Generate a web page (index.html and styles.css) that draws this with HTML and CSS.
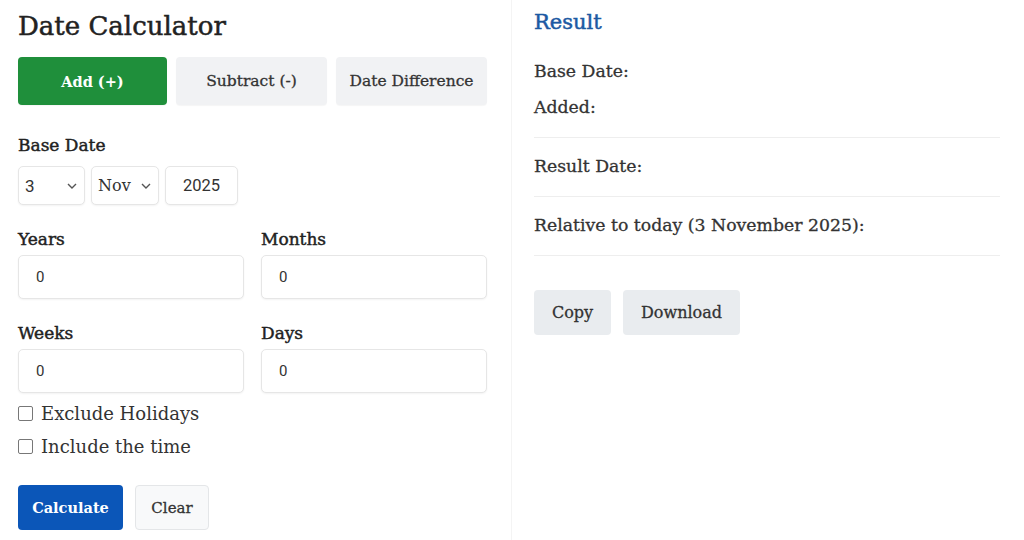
FILE: index.html
```html
<!DOCTYPE html>
<html lang="en">
<head>
<meta charset="utf-8">
<title>Date Calculator</title>
<link rel="stylesheet" href="styles.css">
</head>
<body>
<div class="page">
  <section class="calc">
    <h1 class="title">Date Calculator</h1>
    <div class="tabs">
      <button class="tab tab-active">Add (+)</button>
      <button class="tab">Subtract (-)</button>
      <button class="tab">Date Difference</button>
    </div>
    <div class="field">
      <label class="label">Base Date</label>
      <div class="date-row">
        <div class="select sel-day"><span class="sel-val num">3</span><svg class="chev" viewBox="0 0 10 6"><path d="M1 1l4 4 4-4" fill="none" stroke="#555" stroke-width="1.4"/></svg></div>
        <div class="select sel-mon"><span class="sel-val">Nov</span><svg class="chev" viewBox="0 0 10 6"><path d="M1 1l4 4 4-4" fill="none" stroke="#555" stroke-width="1.4"/></svg></div>
        <div class="year num">2025</div>
      </div>
    </div>
    <div class="grid2">
      <div class="cell">
        <label class="label">Years</label>
        <div class="input num">0</div>
      </div>
      <div class="cell">
        <label class="label">Months</label>
        <div class="input num">0</div>
      </div>
      <div class="cell">
        <label class="label">Weeks</label>
        <div class="input num">0</div>
      </div>
      <div class="cell">
        <label class="label">Days</label>
        <div class="input num">0</div>
      </div>
    </div>
    <div class="checks">
      <label class="check"><span class="box"></span>Exclude Holidays</label>
      <label class="check"><span class="box"></span>Include the time</label>
    </div>
    <div class="actions">
      <button class="btn btn-primary">Calculate</button>
      <button class="btn btn-clear">Clear</button>
    </div>
  </section>
  <section class="result">
    <h2 class="result-title">Result</h2>
    <div class="res-block res-first">
      <p class="res-line">Base Date:</p>
      <p class="res-line">Added:</p>
    </div>
    <div class="res-block">
      <p class="res-line">Result Date:</p>
    </div>
    <div class="res-block">
      <p class="res-line">Relative to today (3 November 2025):</p>
    </div>
    <div class="res-actions">
      <button class="btn btn-gray">Copy</button>
      <button class="btn btn-gray btn-wide">Download</button>
    </div>
  </section>
</div>
</body>
</html>
```

FILE: styles.css
```css
* { box-sizing: border-box; }
html, body { margin: 0; padding: 0; background: #fff; }
body {
  font-family: "Roboto Slab", "DejaVu Serif", serif;
  color: #222;
  width: 1024px;
  height: 540px;
  overflow: hidden;
}
.page {
  display: grid;
  grid-template-columns: 511px 1fr;
  height: 540px;
}
.calc {
  padding: 9px 24px 0 18px;
}
.title {
  margin: 0;
  font-size: 26px;
  font-weight: 400;
  line-height: 34px;
  color: #222;
  -webkit-text-stroke: 0.5px #222;
}
.tabs {
  display: grid;
  grid-template-columns: 149px 151px 151px;
  gap: 9px;
  margin-top: 14px;
}
.tab {
  height: 48px;
  border: none;
  border-radius: 4px;
  background: #f1f2f4;
  color: #333;
  font-family: inherit;
  font-size: 15.5px;
  font-weight: 400;
  padding: 0;
  -webkit-text-stroke: 0.3px #333;
  box-shadow: 0 1px 1px rgba(0,0,0,0.04);
}
.tab-active {
  background: #1f8f3b;
  color: #fff;
  font-size: 14.5px;
  font-weight: 700;
  -webkit-text-stroke: 0;
}
.field { margin-top: 29px; }
.label {
  display: block;
  font-size: 17px;
  font-weight: 400;
  line-height: 22px;
  color: #222;
  -webkit-text-stroke: 0.45px #222;
}
.date-row {
  display: flex;
  gap: 6px;
  margin-top: 10px;
}
.select, .year, .input {
  border: 1px solid #e6e6e6;
  border-radius: 5px;
  background: #fff;
  box-shadow: 0 1px 2px rgba(0,0,0,0.05);
}
.select {
  height: 39px;
  display: flex;
  align-items: center;
  justify-content: space-between;
  padding: 0 7px 0 6px;
  font-size: 16px;
  color: #333;
}
.sel-day { width: 67px; }
.sel-mon { width: 68px; }
.chev { width: 10px; height: 6px; }
.year {
  width: 73px;
  height: 39px;
  display: flex;
  align-items: center;
  justify-content: center;
  font-size: 16.5px;
  color: #333;
}
.num { font-family: Roboto, "Liberation Sans", sans-serif; }
.sel-val.num { font-size: 17px; }
.grid2 {
  display: grid;
  grid-template-columns: 226px 226px;
  column-gap: 17px;
  row-gap: 23px;
  margin-top: 23px;
}
.input {
  margin-top: 5px;
  height: 44px;
  display: flex;
  align-items: center;
  padding: 0 17px;
  font-size: 15px;
  color: #333;
}
.checks { margin-top: 4px; }
.check {
  display: flex;
  align-items: center;
  gap: 8px;
  font-size: 18px;
  line-height: 33px;
  color: #333;
}
.box {
  width: 15px;
  height: 15px;
  border: 1px solid #777;
  border-radius: 2px;
  background: #fff;
}
.actions {
  display: flex;
  gap: 12px;
  margin-top: 22px;
}
.btn {
  height: 45px;
  border-radius: 4px;
  font-family: inherit;
  font-size: 15px;
  font-weight: 400;
  padding: 0;
  cursor: pointer;
  -webkit-text-stroke: 0.3px #333;
}
.btn-primary {
  width: 105px;
  background: #0b56b8;
  color: #fff;
  border: none;
  font-size: 14.5px;
  font-weight: 700;
  -webkit-text-stroke: 0;
}
.btn-clear {
  width: 74px;
  background: #f8f9fa;
  border: 1px solid #e4e6e8;
  color: #333;
}
.result {
  border-left: 1px solid #f4f4f4;
  padding: 9px 24px 0 22px;
}
.result-title {
  margin: 0;
  font-size: 21px;
  font-weight: 400;
  line-height: 26px;
  color: #1c5aa3;
  -webkit-text-stroke: 0.5px #1c5aa3;
}
.res-block {
  border-bottom: 1px solid #eeeeee;
  padding: 10px 0 12px;
}
.res-first { padding-top: 18px; }
.res-line {
  margin: 0;
  font-size: 17.3px;
  line-height: 36px;
  color: #333;
  -webkit-text-stroke: 0.3px #333;
}
.res-actions {
  display: flex;
  gap: 12px;
  margin-top: 34px;
}
.btn-gray {
  width: 77px;
  background: #e9ecef;
  border: none;
  color: #333;
  font-size: 16px;
}
.btn-wide { width: 117px; }
```
